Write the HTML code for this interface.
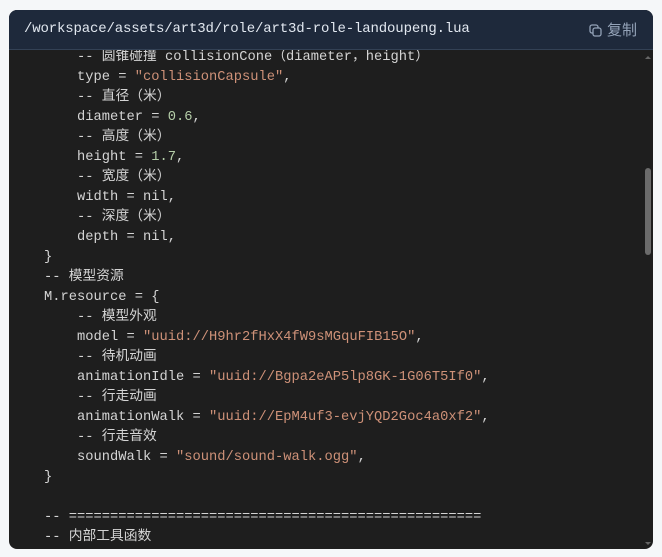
<!DOCTYPE html>
<html><head><meta charset="utf-8"><style>
html,body{margin:0;padding:0;background:#f5f7f9;width:662px;height:557px;overflow:hidden}
.box{position:absolute;left:9px;top:10px;width:644px;height:539px;border-radius:8px;overflow:hidden;background:#1e1e1e}
.hd{position:absolute;left:0;top:0;width:644px;height:40px;background:#1e293b;border-bottom:1px solid #334155;box-sizing:border-box}
.hd .p{position:absolute;left:15px;top:11px;font:14px "Liberation Mono","DejaVu Sans Mono",monospace;color:#e2e8f0;letter-spacing:-0.15px}
.hd .c{position:absolute;right:16px;top:9px;font:15px "Liberation Sans","Noto Sans CJK SC",sans-serif;color:#94a3b8}
.code{position:absolute;left:0;top:40px;width:644px;height:499px;overflow:hidden}
pre{position:absolute;left:35px;top:-2px;margin:0;font:13.75px/20px "Liberation Mono","Noto Sans CJK SC",monospace;color:#d4d4d4}
.s{color:#ce9178}.n{color:#b5cea8}
.sb{position:absolute;left:636px;top:118px;width:6px;height:87px;border-radius:3px;background:#6b6b6b}
.au{position:absolute;left:636px;top:6px;width:0;height:0;border-left:3px solid transparent;border-right:3px solid transparent;border-bottom:3px solid #666}
.ad{position:absolute;left:636px;bottom:4px;width:0;height:0;border-left:3px solid transparent;border-right:3px solid transparent;border-top:3px solid #666}
</style></head><body>
<div class="box">
<div class="hd"><span class="p">/workspace/assets/art3d/role/art3d-role-landoupeng.lua</span>
<span class="c"><svg width="13" height="13" viewBox="0 0 13 13" style="vertical-align:-2px;margin-right:5px"><rect x="1" y="1" width="8" height="8" rx="2" fill="none" stroke="#94a3b8" stroke-width="1.3"/><rect x="4" y="4" width="8" height="8" rx="2" fill="#1e293b" stroke="#94a3b8" stroke-width="1.3"/></svg>复制</span></div>
<div class="code"><pre>    -- 圆锥碰撞 collisionCone（diameter，height）
    type = <span class="s">"collisionCapsule"</span>,
    -- 直径（米）
    diameter = <span class="n">0.6</span>,
    -- 高度（米）
    height = <span class="n">1.7</span>,
    -- 宽度（米）
    width = nil,
    -- 深度（米）
    depth = nil,
}
-- 模型资源
M.resource = {
    -- 模型外观
    model = <span class="s">"uuid://H9hr2fHxX4fW9sMGquFIB15O"</span>,
    -- 待机动画
    animationIdle = <span class="s">"uuid://Bgpa2eAP5lp8GK-1G06T5If0"</span>,
    -- 行走动画
    animationWalk = <span class="s">"uuid://EpM4uf3-evjYQD2Goc4a0xf2"</span>,
    -- 行走音效
    soundWalk = <span class="s">"sound/sound-walk.ogg"</span>,
}

-- ==================================================
-- 内部工具函数</pre>
<div class="au"></div><div class="sb"></div><div class="ad"></div></div>
</div>
</body></html>
